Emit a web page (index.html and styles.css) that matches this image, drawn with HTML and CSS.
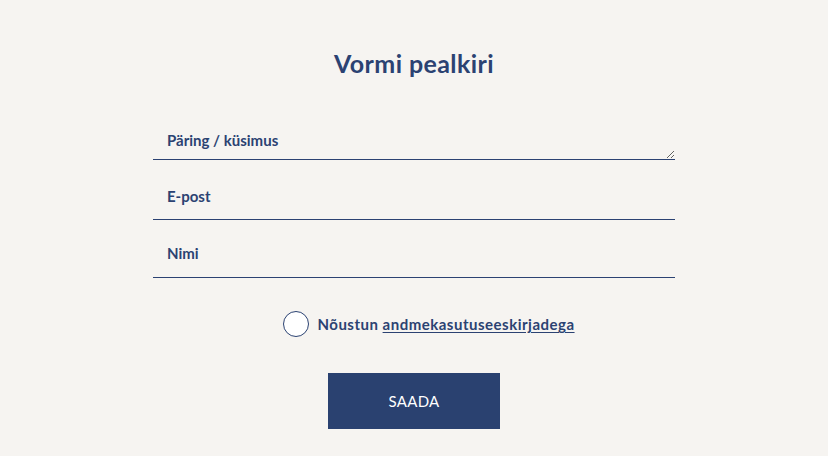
FILE: index.html
```html
<!DOCTYPE html>
<html lang="et">
<head>
<meta charset="utf-8">
<link rel="stylesheet" href="styles.css">
</head>
<body>
<main class="page">
  <h1 class="title">Vormi pealkiri</h1>
  <form class="form">
    <textarea class="field field-area" placeholder="Päring / küsimus"></textarea>
    <input class="field field-email" type="text" placeholder="E-post">
    <input class="field field-name" type="text" placeholder="Nimi">
    <label class="consent">
      <span class="circle"></span>
      <span class="consent-text">Nõustun <a href="#" class="link">andmekasutuseeskirjadega</a></span>
    </label>
    <button type="button" class="submit">SAADA</button>
  </form>
</main>
</body>
</html>
```
FILE: styles.css
```css
* { box-sizing: border-box; }
html, body { margin: 0; padding: 0; }
body {
  background: #f6f4f1;
  font-family: Lato, "Open Sans", sans-serif;
  color: #2b4272;
  width: 828px;
  height: 456px;
  overflow: hidden;
}
.page {
  display: flex;
  flex-direction: column;
  align-items: center;
  padding-top: 48px;
}
.title {
  margin: 0;
  font-size: 25px;
  line-height: 30px;
  font-weight: 700;
  letter-spacing: 0.4px;
}
.form {
  width: 522px;
  display: flex;
  flex-direction: column;
  margin-top: 43px;
}
.field {
  display: block;
  width: 100%;
  border: none;
  border-bottom: 1px solid #2b4272;
  background: transparent;
  font-family: inherit;
  font-size: 15px;
  font-weight: 700;
  color: #2b4272;
  padding: 0 14px;
  outline: none;
  margin: 0;
}
.field::placeholder { color: #2b4272; opacity: 1; }
.field-area {
  height: 39px;
  padding-top: 9px;
  line-height: 20px;
  resize: vertical;
}
.field-email { height: 44px; margin-top: 16px; padding-bottom: 4px; }
.field-name { height: 44px; margin-top: 14px; padding-bottom: 5px; }
.consent {
  display: flex;
  align-items: center;
  justify-content: center;
  gap: 8px;
  margin-top: 33px;
  padding-left: 30px;
  height: 26px;
  font-size: 15px;
  font-weight: 700;
  letter-spacing: 0.5px;
}
.circle {
  width: 26px;
  height: 26px;
  border: 1px solid #2b4272;
  border-radius: 50%;
  background: #fff;
  flex: none;
}
.link { color: #2b4272; text-decoration: underline; text-underline-offset: 2px; }
.submit {
  align-self: center;
  margin-top: 36px;
  width: 172px;
  height: 56px;
  border: none;
  background: #2a4170;
  color: #fff;
  font-family: inherit;
  font-size: 15px;
  font-weight: 400;
  letter-spacing: 0.3px;
}
```
